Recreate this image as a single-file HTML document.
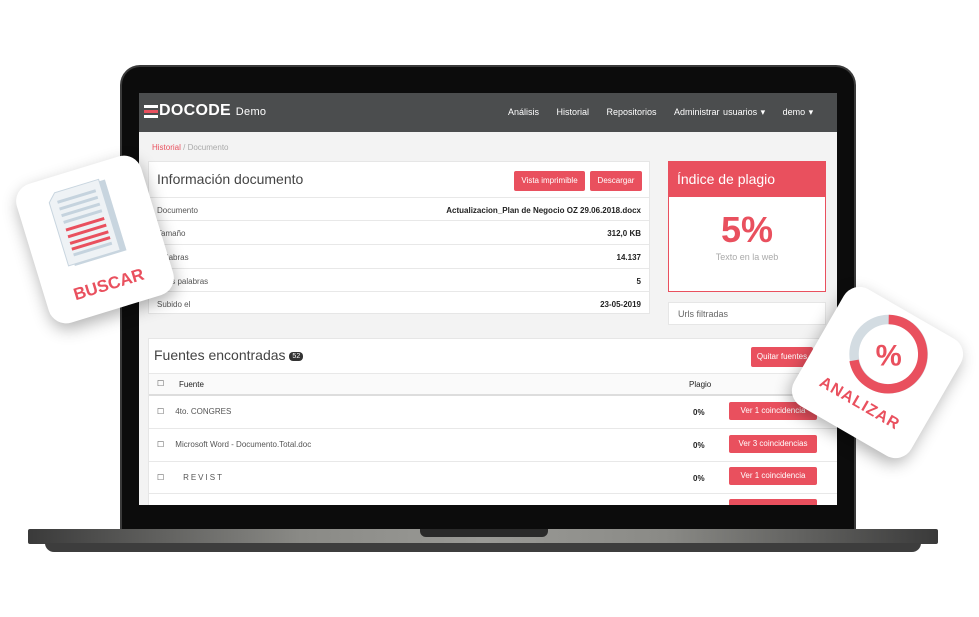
<!DOCTYPE html>
<html><head><meta charset="utf-8"><style>
*{box-sizing:border-box;margin:0;padding:0}
body{width:979px;height:617px;background:#fff;position:relative;overflow:hidden;font-family:"Liberation Sans",sans-serif;color:#333}
.abs{position:absolute}
.bezel{left:120px;top:65px;width:736px;height:466px;background:#0c0c0c;border-radius:20px 20px 0 0;border:2px solid #3a3a3a;border-bottom:none}
.screen{left:139px;top:93px;width:698px;height:412px;background:#f3f3f3;overflow:hidden}
.nav{left:0;top:0;width:698px;height:39px;background:#4b4d4e;color:#fff}
.panel{background:#fff;border:1px solid #e6e6e6}
.row{position:absolute;left:0;width:100%;border-top:1px solid #e8e8e8;font-size:8px;color:#555}
.row b{position:absolute;right:8px;top:8px;color:#222;font-size:8px}
.row span{position:absolute;left:8px;top:8px}
.btn{position:absolute;background:#e9505e;color:#fff;font-size:8px;border-radius:2px;text-align:center}
.card{background:#fff;border-radius:18px;box-shadow:0 6px 16px rgba(0,0,0,.3)}
</style></head><body>
<div class="abs bezel"></div>
<div class="abs screen">
  <div class="abs nav">
    <div class="abs" style="left:5px;top:12px;width:14px;height:3px;background:#fff"></div>
    <div class="abs" style="left:5px;top:17px;width:14px;height:3px;background:#e9505e"></div>
    <div class="abs" style="left:5px;top:22px;width:14px;height:3px;background:#fff"></div>
    <div class="abs" style="left:20px;top:9px;font-size:16px;font-weight:bold;letter-spacing:.3px">DOCODE <span style="font-size:11px;font-weight:normal">Demo</span></div>
    <div class="abs" style="left:369px;top:14px;font-size:9px;word-spacing:1px;white-space:nowrap">Análisis&nbsp;&nbsp;&nbsp;&nbsp;&nbsp;Historial&nbsp;&nbsp;&nbsp;&nbsp;&nbsp;Repositorios&nbsp;&nbsp;&nbsp;&nbsp;&nbsp;Administrar usuarios ▾&nbsp;&nbsp;&nbsp;&nbsp;&nbsp;demo ▾</div>
  </div>
  <div class="abs" style="left:13px;top:50px;font-size:8px;color:#aaa"><span style="color:#e9505e">Historial</span> / Documento</div>
  <div class="abs panel" style="left:9px;top:68px;width:502px;height:153px">
    <div class="abs" style="left:8px;top:9px;font-size:14px;color:#444">Información documento</div>
    <div class="btn" style="left:365px;top:9px;width:71px;height:20px;line-height:20px">Vista imprimible</div>
    <div class="btn" style="left:441px;top:9px;width:52px;height:20px;line-height:20px">Descargar</div>
    <div class="row" style="top:35px;height:24px"><span>Documento</span><b>Actualizacion_Plan de Negocio OZ 29.06.2018.docx</b></div>
    <div class="row" style="top:58px;height:24px"><span>Tamaño</span><b>312,0 KB</b></div>
    <div class="row" style="top:82px;height:24px"><span>Palabras</span><b>14.137</b></div>
    <div class="row" style="top:106px;height:24px"><span>Citas palabras</span><b>5</b></div>
    <div class="row" style="top:129px;height:24px"><span>Subido el</span><b>23-05-2019</b></div>
  </div>
  <div class="abs" style="left:529px;top:68px;width:158px;height:131px;border:1px solid #e9505e;background:#fff">
    <div style="height:35px;background:#e9505e;color:#fff;font-size:14px;padding:9px 8px">Índice de plagio</div>
    <div style="text-align:center;color:#e9505e;font-size:36px;font-weight:bold;margin-top:12px">5%</div>
    <div style="text-align:center;color:#aaa;font-size:9px;margin-top:1px">Texto en la web</div>
  </div>
  <div class="abs panel" style="left:529px;top:209px;width:158px;height:23px;font-size:9px;color:#666;padding:6px 9px">Urls filtradas</div>
  <div class="abs panel" style="left:9px;top:245px;width:700px;height:180px">
    <div class="abs" style="left:5px;top:8px;font-size:14px;color:#444">Fuentes encontradas <span style="background:#333;color:#fff;font-size:7px;border-radius:4px;padding:1px 3px;vertical-align:middle">52</span></div>
    <div class="btn" style="left:602px;top:8px;width:62px;height:20px;line-height:20px">Quitar fuentes</div>
    <div class="row" style="top:34px;height:21px;background:#fafafa"><span style="top:5px">☐</span><b style="left:30px;right:auto;top:6px;font-weight:normal">Fuente</b><b style="left:540px;right:auto;top:6px;font-weight:normal">Plagio</b></div>
    <div class="row" style="top:55px;height:34px;border-top:2px solid #ddd"><span style="top:11px">☐ &nbsp;&nbsp;&nbsp;&nbsp;4to. CONGRES</span><b style="left:544px;right:auto;top:12px">0%</b></div>
    <div class="btn" style="left:580px;top:63px;width:88px;height:18px;line-height:18px">Ver 1 coincidencia</div>
    <div class="row" style="top:89px;height:33px"><span style="top:11px">☐ &nbsp;&nbsp;&nbsp;&nbsp;Microsoft Word - Documento.Total.doc</span><b style="left:544px;right:auto;top:12px">0%</b></div>
    <div class="btn" style="left:580px;top:96px;width:88px;height:18px;line-height:18px">Ver 3 coincidencias</div>
    <div class="row" style="top:122px;height:32px"><span style="top:11px;letter-spacing:2px">☐ &nbsp;&nbsp;&nbsp;REVIST</span><b style="left:544px;right:auto;top:12px">0%</b></div>
    <div class="btn" style="left:580px;top:128px;width:88px;height:18px;line-height:18px">Ver 1 coincidencia</div>
    <div class="row" style="top:154px;height:30px"></div>
    <div class="btn" style="left:580px;top:160px;width:88px;height:18px"></div>
  </div>
</div>
<div class="abs" style="left:28px;top:529px;width:910px;height:15px;background:linear-gradient(90deg,#3a3a3a,#8a8a86 30%,#9a9a96 50%,#8a8a86 70%,#3a3a3a);border-radius:2px"></div>
<div class="abs" style="left:45px;top:543px;width:876px;height:9px;background:#3d3d3d;border-radius:0 0 20px 20px"></div>
<div class="abs" style="left:420px;top:529px;width:128px;height:8px;background:#2a2a2a;border-radius:0 0 6px 6px"></div>

<div class="abs card" style="left:30px;top:167px;width:130px;height:145px;transform:rotate(-17deg)">
  <svg class="abs" style="left:28px;top:12px" width="72" height="86" viewBox="0 0 72 86">
    <rect x="10" y="6" width="54" height="74" fill="#c8d5df"/>
    <path d="M4 12 L12 4 L58 4 L58 78 L4 78 Z" fill="#eef2f5" stroke="#c8d5df"/>
    <g stroke="#c5d3de" stroke-width="3"><line x1="12" y1="14" x2="52" y2="14"/><line x1="12" y1="21" x2="52" y2="21"/><line x1="12" y1="28" x2="52" y2="28"/><line x1="12" y1="35" x2="52" y2="35"/><line x1="12" y1="69" x2="52" y2="69"/></g>
    <g stroke="#e9505e" stroke-width="3"><line x1="12" y1="43" x2="52" y2="43"/><line x1="12" y1="50" x2="52" y2="50"/><line x1="12" y1="57" x2="52" y2="57"/><line x1="12" y1="63" x2="52" y2="63"/></g>
  </svg>
  <div class="abs" style="left:0;width:130px;top:110px;text-align:center;color:#e9505e;font-size:17px;font-weight:bold">BUSCAR</div>
</div>
<div class="abs card" style="left:810px;top:305px;width:135px;height:135px;transform:rotate(30deg)">
  <svg class="abs" style="left:26px;top:4px;transform:rotate(-30deg)" width="84" height="84" viewBox="0 0 80 80">
    <circle cx="40" cy="40" r="33" fill="none" stroke="#d3dce2" stroke-width="9"/>
    <path d="M40 7 A33 33 0 1 1 7 46" fill="none" stroke="#e9505e" stroke-width="9"/>
    <text x="40" y="51" text-anchor="middle" font-size="28" font-weight="bold" fill="#e9505e" font-family="Liberation Sans">%</text>
  </svg>
  <div class="abs" style="left:0;width:135px;top:95px;text-align:center;color:#e9505e;font-size:16px;font-weight:bold;letter-spacing:1px">ANALIZAR</div>
</div>
</body></html>
